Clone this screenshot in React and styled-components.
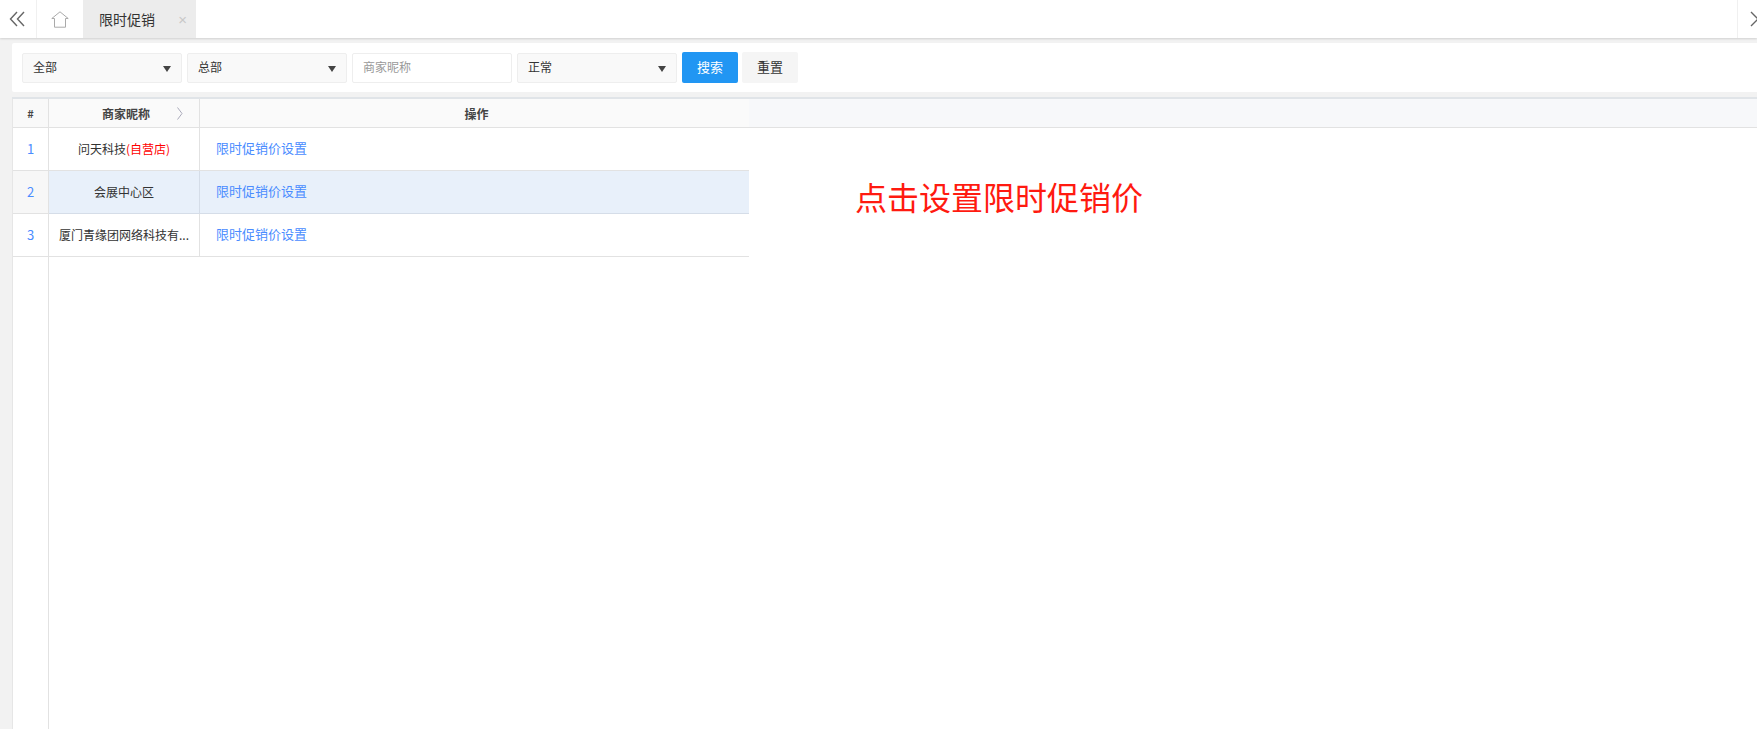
import React from 'react'
import styled, { createGlobalStyle } from 'styled-components'

const Global = createGlobalStyle`
  html, body { margin: 0; padding: 0; height: 100%; overflow: hidden; }
  body {
    background: #f2f2f2;
    font-family: "Noto Sans CJK SC", "Liberation Sans", sans-serif;
    font-size: 12px;
    color: #333;
  }
  #root { height: 100%; }
`

const Page = styled.div`
  width: 1757px;
  height: 729px;
  display: flex;
  flex-direction: column;
  position: relative;
  overflow: hidden;
`

const TabBar = styled.div`
  height: 38px;
  flex: none;
  display: flex;
  background: #fff;
  box-shadow: 0 1px 2px rgba(0, 0, 0, 0.14);
  position: relative;
  z-index: 2;
`

const NavButton = styled.div`
  width: ${p => p.$w}px;
  flex: none;
  display: flex;
  align-items: center;
  justify-content: ${p => p.$end ? 'flex-start' : 'center'};
  padding-left: ${p => p.$end ? '12px' : '0'};
  padding-right: ${p => p.$end ? '0' : '3px'};
  box-sizing: border-box;
  border-${p => p.$end ? 'left' : 'right'}: 1px solid #f0f0f0;
  overflow: hidden;
`

const HomeButton = styled.div`
  width: 46px;
  flex: none;
  display: flex;
  align-items: center;
  justify-content: center;
`

const Tab = styled.div`
  width: 113px;
  flex: none;
  background: #ececec;
  display: flex;
  align-items: center;
  justify-content: space-between;
  padding: 0 9px 0 16px;
  box-sizing: border-box;
  font-size: 14px;
  color: #333;
`

const TabClose = styled.span`
  color: #c8c8c8;
  font-size: 15px;
  font-family: "Liberation Sans", sans-serif;
`

const Spacer = styled.div`
  flex: 1;
`

const Content = styled.div`
  flex: 1;
  display: flex;
  flex-direction: column;
  padding: 5px 0 0 12px;
  min-height: 0;
`

const FilterCard = styled.div`
  height: 49px;
  flex: none;
  background: #fff;
  border-radius: 2px 0 0 2px;
  display: flex;
  align-items: center;
  padding: 0 0 0 10px;
  gap: 5px;
`

const SelectBox = styled.div`
  width: 160px;
  height: 30px;
  box-sizing: border-box;
  background: #f9f9f9;
  border: 1px solid #eee;
  border-radius: 2px;
  display: flex;
  align-items: center;
  justify-content: space-between;
  padding: 0 10px 2px 10px;
  font-size: 12px;
  color: #333;
`

const Caret = styled.span`
  width: 0;
  height: 0;
  border-left: 4px solid transparent;
  border-right: 4px solid transparent;
  border-top: 6px solid #444;
  margin-top: 4px;
`

const TextInput = styled.div`
  width: 160px;
  height: 30px;
  box-sizing: border-box;
  background: #fff;
  border: 1px solid #eee;
  border-radius: 2px;
  display: flex;
  align-items: center;
  padding: 0 10px 2px;
  font-size: 12px;
  color: #999;
`

const Button = styled.div`
  height: 31px;
  box-sizing: border-box;
  width: 56px;
  margin-left: ${p => p.$primary ? 0 : -1}px;
  padding-bottom: 2px;
  background: ${p => p.$primary ? '#2196f3' : '#f5f5f5'};
  color: ${p => p.$primary ? '#fff' : '#333'};
  border-radius: 2px;
  display: flex;
  align-items: center;
  justify-content: center;
  font-size: 13px;
`

const TablePanel = styled.div`
  flex: 1;
  margin-top: 5px;
  background: #fff;
  border-top: 2px solid #e0e4e8;
  display: flex;
  min-height: 0;
`

const IndexColumn = styled.div`
  width: 35px;
  flex: none;
  border-right: 1px solid #e2e2e2;
  border-left: 1px solid #e6e6e6;
  box-sizing: content-box;
`

const IndexHead = styled.div`
  height: 28px;
  background: #f9f9f9;
  border-bottom: 1px solid #e2e2e2;
  display: flex;
  align-items: center;
  justify-content: center;
  font-weight: 700;
  font-size: 11px;
  color: #444;
`

const IndexCell = styled.div`
  height: 43px;
  box-sizing: border-box;
  background: ${p => p.$hover ? '#f7f7f7' : '#fff'};
  border-bottom: 1px solid #e2e2e2;
  display: flex;
  align-items: center;
  justify-content: center;
  padding-bottom: 2px;
  font-size: 13px;
  color: #4a8cff;
`

const DataColumn = styled.div`
  flex: 1;
  min-width: 0;
`

const HeadStrip = styled.div`
  height: 28px;
  background: #f7f8fa;
  border-bottom: 1px solid #e2e2e2;
  display: grid;
  grid-template-columns: 151px 549px;
`

const HeadCell = styled.div`
  position: relative;
  background: #fafafa;
  display: flex;
  align-items: center;
  justify-content: center;
  padding-left: 4px;
  font-weight: 700;
  font-size: 12px;
  color: #444;
  border-right: ${p => p.$last ? 'none' : '1px solid #e2e2e2'};
`

const SortMark = styled.svg`
  position: absolute;
  right: 16px;
  top: 8px;
`

const Row = styled.div`
  width: 700px;
  height: 43px;
  box-sizing: border-box;
  display: grid;
  grid-template-columns: 151px 549px;
  background: ${p => p.$hover ? '#e8f0fa' : '#fff'};
  border-bottom: 1px solid ${p => p.$hover ? '#d5dde8' : '#e2e2e2'};
`

const NameCell = styled.div`
  border-right: 1px solid ${p => p.$hover ? '#d5dde8' : '#e2e2e2'};
  display: flex;
  align-items: center;
  justify-content: center;
  padding-bottom: 1px;
  font-size: 12px;
  color: #333;
  white-space: nowrap;
`

const OwnTag = styled.span`
  color: #f00;
`

const ActionCell = styled.div`
  display: flex;
  align-items: center;
  padding: 0 0 3px 16px;
  font-size: 13px;
  color: #4a8cff;
`

const Notice = styled.div`
  position: absolute;
  left: 855px;
  top: 173px;
  font-size: 32px;
  line-height: 46px;
  color: #ff1a10;
  white-space: nowrap;
`

const rows = [
  { name: '问天科技', own: true },
  { name: '会展中心区', hover: true },
  { name: '厦门青缘团网络科技有...' },
]

export default function App() {
  return (
    <Page>
      <Global />
      <TabBar>
        <NavButton $w={37}>
          <svg width="16" height="16" viewBox="0 0 16 16" fill="none" stroke="#666" strokeWidth="1.4">
            <path d="M8 1 1.5 8 8 15M15 1 8.5 8 15 15" />
          </svg>
        </NavButton>
        <HomeButton>
          <svg width="18" height="17" viewBox="0 0 18 17" fill="none" stroke="#aaa" strokeWidth="1">
            <path d="M9 .8.8 7.5h2.7v8.7h11V7.5h2.7z" />
          </svg>
        </HomeButton>
        <Tab>
          限时促销
          <TabClose>×</TabClose>
        </Tab>
        <Spacer />
        <NavButton $w={20} $end>
          <svg width="16" height="16" viewBox="0 0 16 16" fill="none" stroke="#666" strokeWidth="1.4" style={{ flex: 'none' }}>
            <path d="M1 1 8 8 1 15" />
          </svg>
        </NavButton>
      </TabBar>
      <Content>
        <FilterCard>
          <SelectBox>全部<Caret /></SelectBox>
          <SelectBox>总部<Caret /></SelectBox>
          <TextInput>商家昵称</TextInput>
          <SelectBox>正常<Caret /></SelectBox>
          <Button $primary>搜索</Button>
          <Button>重置</Button>
        </FilterCard>
        <TablePanel>
          <IndexColumn>
            <IndexHead>#</IndexHead>
            {rows.map((r, i) => (
              <IndexCell key={i} $hover={r.hover}>{i + 1}</IndexCell>
            ))}
          </IndexColumn>
          <DataColumn>
            <HeadStrip>
              <HeadCell>
                商家昵称
                <SortMark width="6" height="13" viewBox="0 0 6 13" fill="none" stroke="#aab" strokeWidth="1">
                  <path d="M.5.5 5 6.5.5 12.5" />
                </SortMark>
              </HeadCell>
              <HeadCell $last>操作</HeadCell>
            </HeadStrip>
            {rows.map((r, i) => (
              <Row key={i} $hover={r.hover}>
                <NameCell $hover={r.hover}>
                  {r.name}
                  {r.own && <OwnTag>(自营店)</OwnTag>}
                </NameCell>
                <ActionCell>限时促销价设置</ActionCell>
              </Row>
            ))}
          </DataColumn>
        </TablePanel>
      </Content>
      <Notice>点击设置限时促销价</Notice>
    </Page>
  )
}
